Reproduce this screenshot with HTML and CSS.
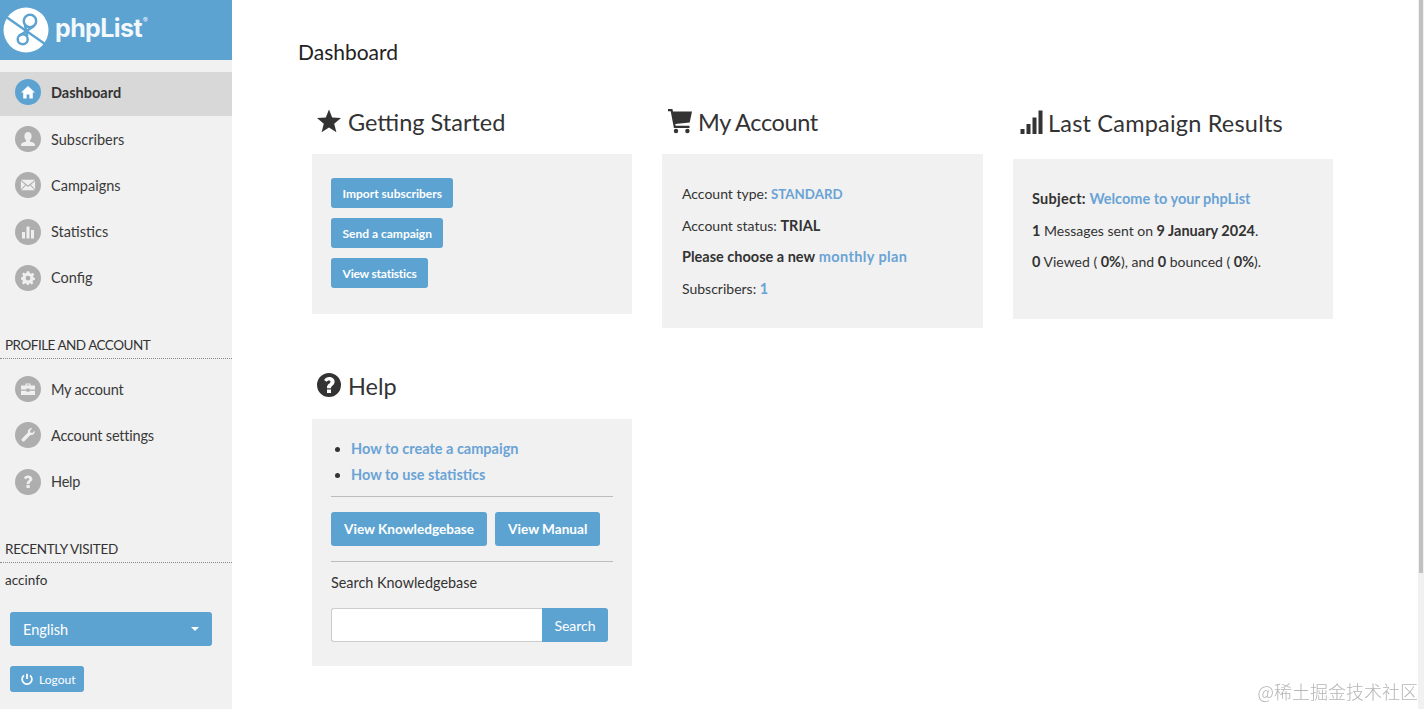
FILE: index.html
```html
<!DOCTYPE html>
<html lang="en">
<head>
<meta charset="utf-8">
<title>phpList Dashboard</title>
<link rel="stylesheet" href="styles.css">
</head>
<body>
<div class="page">
  <aside class="sidebar">
    <header class="brand">
      <svg class="brand-mark" viewBox="0 0 46 46" width="46" height="46">
        <circle cx="23" cy="23" r="22.5" fill="#fff"/>
        <path d="M4 10.5 L42 37" stroke="#5ca3d2" stroke-width="2.4" fill="none"/>
        <path d="M22 18 L24.2 29 M31 19 L16 29" stroke="#5ca3d2" stroke-width="2.5" fill="none"/>
        <circle cx="27" cy="14" r="6.2" stroke="#5ca3d2" stroke-width="2.5" fill="none"/>
        <circle cx="19.7" cy="32.3" r="5" stroke="#5ca3d2" stroke-width="2.5" fill="none"/>
      </svg>
      <span class="brand-name">phpList<sup class="brand-reg">®</sup></span>
    </header>
    <nav class="nav nav-main">
      <a class="nav-item active"><span class="nav-icon"><svg viewBox="0 0 16 16"><path d="M8 2 L1 8.5 H3.2 V14.5 H6.6 V10.5 H9.4 V14.5 H12.8 V8.5 H15 Z"/></svg></span>Dashboard</a>
      <a class="nav-item"><span class="nav-icon"><svg viewBox="0 0 16 16"><path d="M8 1 C10.4 1 11.6 3 11.6 5.2 C11.6 7 10.8 8.4 9.9 9.3 V10.4 C11.7 11.1 14.6 11.6 14.9 13.2 V15 H1.1 V13.2 C1.4 11.6 4.3 11.1 6.1 10.4 V9.3 C5.2 8.4 4.4 7 4.4 5.2 C4.4 3 5.6 1 8 1 Z"/></svg></span>Subscribers</a>
      <a class="nav-item"><span class="nav-icon"><svg viewBox="0 0 18 16"><path d="M1 2 H17 L9 8.6 Z M1 3.6 L5.8 7.6 L1 12.8 Z M17 3.6 V12.8 L12.2 7.6 Z M6.7 8.4 L9 10.2 L11.3 8.4 L16.6 14 H1.4 Z"/></svg></span>Campaigns</a>
      <a class="nav-item"><span class="nav-icon"><svg viewBox="0 0 16 16"><path d="M2 8 H5 V14.5 H2 Z M6.5 2.5 H9.5 V14.5 H6.5 Z M11 6 H14 V14.5 H11 Z"/></svg></span>Statistics</a>
      <a class="nav-item"><span class="nav-icon"><svg viewBox="0 0 16 16"><path fill-rule="evenodd" d="M6.8 1.2 H9.2 L9.6 3 L11.1 3.7 L12.8 2.8 L14.3 4.7 L13 6 L13.3 7.2 L15 8 V9.8 L13.2 10.3 L12.5 11.6 L13.3 13.3 L11.5 14.6 L10.1 13.3 L9 13.6 L8.6 15 H6.9 L6.4 13.6 L5 13.2 L3.5 14.4 L1.9 13 L2.9 11.4 L2.4 10 L1 9.5 V7.3 L2.6 6.9 L3.1 5.5 L2 4 L3.6 2.6 L5.1 3.6 L6.4 3 Z M8 5.8 A2.4 2.4 0 1 0 8 10.6 A2.4 2.4 0 1 0 8 5.8 Z"/></svg></span>Config</a>
    </nav>
    <h2 class="side-heading heading-profile">PROFILE AND ACCOUNT</h2>
    <nav class="nav nav-profile">
      <a class="nav-item"><span class="nav-icon"><svg viewBox="0 0 16 16"><path fill-rule="evenodd" d="M5.5 2.5 H10.5 V4.5 H15 V8.5 H9.5 V7.5 H6.5 V8.5 H1 V4.5 H5.5 Z M6.7 3.6 V4.5 H9.3 V3.6 Z M1 9.7 H6.5 V10.7 H9.5 V9.7 H15 V14 H1 Z"/></svg></span>My account</a>
      <a class="nav-item"><span class="nav-icon"><svg viewBox="0 0 16 16"><path d="M14.6 3.8 C15.2 6.3 13 8.6 10.4 8 L4.6 14 C3.9 14.7 2.8 14.7 2.1 14 C1.4 13.3 1.4 12.2 2.1 11.5 L8 5.6 C7.4 3 9.7 0.8 12.2 1.4 L9.9 3.7 L10.4 5.6 L12.3 6.1 Z"/></svg></span>Account settings</a>
      <a class="nav-item"><span class="nav-icon"><svg viewBox="0 0 16 16"><path d="M8 1.5 C10.7 1.5 12.4 3 12.4 5.1 C12.4 7.6 9.6 7.8 9.6 9.9 H6.6 C6.6 6.9 9.2 6.6 9.2 5.2 C9.2 4.5 8.7 4.1 8 4.1 C7.2 4.1 6.5 4.7 6 5.4 L3.9 3.8 C5 2.3 6.3 1.5 8 1.5 Z M6.5 11 H9.7 V14 H6.5 Z"/></svg></span>Help</a>
    </nav>
    <h2 class="side-heading heading-recent">RECENTLY VISITED</h2>
    <div class="recent">accinfo</div>
    <div class="lang-select"><span>English</span><span class="caret"></span></div>
    <a class="logout"><svg class="logout-icon" viewBox="0 0 16 16" width="14" height="14"><path d="M8 2 V8 M4.6 3.8 A5.6 5.6 0 1 0 11.4 3.8" fill="none" stroke="#fff" stroke-width="2"/></svg>Logout</a>
  </aside>

  <main class="main">
    <h1 class="page-title">Dashboard</h1>
    <div class="columns">
      <div class="column">
        <section class="block">
          <h3 class="block-title"><svg class="title-icon icon-star" viewBox="0 0 26 26"><path d="M13 1.5 L16.2 9.6 L25 10.1 L18.2 15.7 L20.4 24.2 L13 19.5 L5.6 24.2 L7.8 15.7 L1 10.1 L9.8 9.6 Z"/></svg>Getting Started</h3>
          <div class="panel panel-started">
            <a class="btn-small">Import subscribers</a>
            <a class="btn-small">Send a campaign</a>
            <a class="btn-small btn-tight">View statistics</a>
          </div>
        </section>
        <section class="block block-help">
          <h3 class="block-title"><svg class="title-icon icon-help" viewBox="0 0 26 26"><path fill-rule="evenodd" d="M13 1 A12 12 0 1 1 13 25 A12 12 0 1 1 13 1 Z M13.3 5 C10.8 5 9.3 6 8.1 7.9 L10.6 9.8 C11.3 8.9 11.9 8.4 12.9 8.4 C13.8 8.4 14.5 8.9 14.5 9.7 C14.5 11.5 11 11.9 11 15.5 V16.3 H15 C15 13.6 18.6 13.6 18.6 9.6 C18.6 6.6 15.9 5 13.3 5 Z M11 17.6 V21 H15 V17.6 Z"/></svg>Help</h3>
          <div class="panel panel-help">
            <ul class="help-links">
              <li><a class="link">How to create a campaign</a></li>
              <li><a class="link">How to use statistics</a></li>
            </ul>
            <hr class="rule rule-first">
            <div class="btn-row">
              <a class="btn-large">View Knowledgebase</a>
              <a class="btn-large">View Manual</a>
            </div>
            <hr class="rule rule-second">
            <p class="search-label">Search Knowledgebase</p>
            <div class="search">
              <input class="search-input" type="text" aria-label="Search Knowledgebase">
              <button class="search-btn" type="button">Search</button>
            </div>
          </div>
        </section>
      </div>
      <div class="column">
        <section class="block block-account">
          <h3 class="block-title"><svg class="title-icon icon-cart" viewBox="0 0 26 26"><path d="M1 1 H5.4 L6 3.6 H25 L22.7 14.4 L8.3 15.9 L8.7 17.8 H22.5 V20 H6.9 L3.7 3.2 H1 Z"/><circle cx="9" cy="23" r="2.2"/><circle cx="20.4" cy="23" r="2.2"/></svg>My Account</h3>
          <div class="panel panel-account">
            <p class="row">Account type: <a class="link link-caps">STANDARD</a></p>
            <p class="row">Account status: <strong>TRIAL</strong></p>
            <p class="row"><strong>Please choose a new</strong> <a class="link link-wide">monthly plan</a></p>
            <p class="row">Subscribers: <a class="link">1</a></p>
          </div>
        </section>
      </div>
      <div class="column column-last">
        <section class="block">
          <h3 class="block-title"><svg class="title-icon icon-bars" viewBox="0 0 24 26"><path d="M0.5 19 H4.5 V24 H0.5 Z M6.5 14 H10.5 V24 H6.5 Z M12.5 7.5 H16.5 V24 H12.5 Z M18.5 0.5 H22.5 V24 H18.5 Z"/></svg>Last Campaign Results</h3>
          <div class="panel panel-results">
            <p class="row"><strong class="subject">Subject:</strong> <a class="link">Welcome to your phpList</a></p>
            <p class="row"><strong>1</strong> Messages sent on <strong>9 January 2024</strong>.</p>
            <p class="row"><strong>0</strong> Viewed ( <strong>0%</strong>), and <strong>0</strong> bounced ( <strong>0%</strong>).</p>
          </div>
        </section>
      </div>
    </div>
  </main>
</div>
<div class="scrollbar"><div class="scroll-thumb"></div></div>
<div class="watermark">@稀土掘金技术社区</div>
</body>
</html>
```
FILE: styles.css
```css
* { box-sizing: border-box; }
html, body { margin: 0; height: 100%; overflow: hidden; }
body {
  font-family: "Lato", "Noto Sans", sans-serif;
  font-size: 14.5px;
  color: #333;
  background: #fff;
}
a { color: inherit; text-decoration: none; }
.page { display: flex; height: 709px; }

.sidebar {
  width: 232px;
  flex: none;
  background: #f1f1f1;
  display: flex;
  flex-direction: column;
}
.brand {
  height: 60px;
  background: #5ca3d2;
  display: flex;
  align-items: center;
  gap: 6px;
  padding: 0 0 1px 3px;
  flex: none;
}
.brand-mark { flex: none; margin-top: 1px; }
.brand-name {
  font-family: "Inter", "Liberation Sans", sans-serif;
  font-weight: 700;
  font-size: 25px;
  letter-spacing: -0.6px;
  color: #f2f8fc;
  display: flex;
  margin-top: -3px;
}
.brand-reg { font-size: 7px; font-weight: 400; line-height: 1; margin: 4px 0 0 1px; letter-spacing: 0; }
.nav { display: flex; flex-direction: column; }
.nav-main { margin-top: 12px; }
.nav-item {
  display: flex;
  align-items: center;
  gap: 10px;
  height: 46.25px;
  padding-left: 15px;
  color: #3a3a3a;
}
.nav-item.active {
  background: #d8d8d8;
  height: 44px;
  padding-bottom: 4px;
  font-weight: 700;
  color: #333;
}
.nav-icon {
  width: 26px;
  height: 26px;
  border-radius: 50%;
  background: #aeaeae;
  display: flex;
  align-items: center;
  justify-content: center;
  flex: none;
}
.nav-icon svg { width: 16px; height: 16px; fill: #efefef; }
.active .nav-icon { background: #5ca3d2; }
.active .nav-icon svg { fill: #fff; }
.nav-profile .nav-item { letter-spacing: -0.2px; }

.side-heading {
  margin: 0;
  padding: 0 0 3px 5px;
  font-size: 13.5px;
  font-weight: 400;
  line-height: 20px;
  color: #333;
  border-bottom: 1px dotted #8a8a8a;
}
.heading-profile { margin-top: 34px; letter-spacing: -0.5px; }
.nav-profile { margin-top: 7px; }
.heading-recent { margin-top: 34.25px; letter-spacing: -0.3px; }
.recent { padding: 8px 0 0 5px; line-height: 18px; font-size: 13.5px; }
.lang-select {
  margin: 23px 0 0 10px;
  width: 202px;
  height: 34px;
  background: #5ca3d2;
  border-radius: 3px;
  color: #fff;
  display: flex;
  align-items: center;
  justify-content: space-between;
  padding: 0 13px;
}
.caret {
  width: 0;
  height: 0;
  border-left: 4px solid transparent;
  border-right: 4px solid transparent;
  border-top: 4px solid #fff;
}
.logout {
  margin: 20px 0 0 10px;
  width: 74px;
  height: 26px;
  background: #5ca3d2;
  border-radius: 3px;
  color: #fff;
  font-size: 12px;
  display: flex;
  align-items: center;
  padding-left: 10px;
  gap: 5px;
}
.logout-icon { flex: none; }

.main { flex: 1; padding: 0 0 0 65px; }
.page-title {
  margin: 0;
  padding: 39px 0 0 1px;
  font-size: 21px;
  line-height: 26px;
  font-weight: 400;
  color: #222;
}
.columns { display: flex; margin: 1px 0 0 15px; gap: 30px; }
.column { width: 320px; flex: none; }
.column:nth-child(2) { width: 321px; }
.column-last { padding-top: 1px; }

.block-title {
  margin: 0;
  height: 88px;
  padding-top: 41px;
  padding-left: 4px;
  display: flex;
  align-items: flex-start;
  font-size: 23.5px;
  line-height: 30px;
  font-weight: 400;
  color: #333;
  gap: 5px;
}
.block-title { gap: 6px; }
.block-account .block-title { letter-spacing: -0.4px; padding-left: 5px; gap: 5px; }
.column-last .block-title { height: 92px; padding-left: 6px; padding-top: 41px; gap: 3px; letter-spacing: 0.2px; }
.title-icon { width: 26px; height: 26px; flex: none; fill: #333; margin-top: 1px; }
.column-last .title-icon { margin-top: 2px; }
.block-help .block-title { height: 105px; padding-top: 57px; }

.panel { background: #f1f1f1; padding: 24px 19px; }
.panel-started { height: 160px; display: flex; flex-direction: column; align-items: flex-start; gap: 10px; }
.panel-account { height: 174px; padding-top: 31px; padding-left: 20px; }
.panel-results { height: 160px; padding-top: 31px; }
.panel-help { height: 247px; padding-top: 17px; }

.btn-small {
  background: #5ca3d2;
  color: #fff;
  font-size: 12px;
  font-weight: 700;
  height: 30px;
  padding: 0 11.5px;
  border-radius: 3px;
  display: flex;
  align-items: center;
}
.btn-tight { letter-spacing: -0.2px; }
.row { margin: 0 0 13.5px; line-height: 18px; font-size: 14px; }
strong { font-weight: 700; font-size: 14.5px; }
.subject { letter-spacing: 0.25px; }
.link { color: #6aa3d5; font-weight: 700; font-size: 14.5px; }
.link-caps { font-size: 13.3px; }
.link-wide { letter-spacing: 0.4px; }

.help-links { margin: 0; padding: 0 0 0 20px; color: #333; }
.help-links li { line-height: 26px; font-size: 14.5px; }
.rule { border: 0; border-top: 1px solid #bdbdbd; margin: 0; }
.rule-first { margin-top: 8px; }
.btn-row { display: flex; gap: 8px; margin-top: 15px; }
.btn-large {
  height: 34px;
  padding: 0 13px;
  background: #5ca3d2;
  color: #fff;
  font-weight: 700;
  font-size: 13.6px;
  border-radius: 3px;
  display: flex;
  align-items: center;
}
.rule-second { margin-top: 15px; }
.search-label { margin: 12px 0 0; line-height: 18px; font-size: 14.4px; }
.search { display: flex; margin-top: 16px; width: 277px; height: 34px; }
.search-input {
  flex: 1;
  min-width: 0;
  border: 1px solid #ccc;
  border-right: 0;
  border-radius: 3px 0 0 3px;
  background: #fff;
  padding: 0;
}
.search-btn {
  width: 66px;
  border: 0;
  background: #5ca3d2;
  color: #fff;
  font-family: inherit;
  font-size: 14px;
  border-radius: 0 3px 3px 0;
  padding: 0;
}

.scrollbar {
  position: fixed;
  top: 0;
  right: 0;
  width: 6px;
  height: 709px;
  background: #f1f1f1;
}
.scroll-thumb { width: 4px; margin-left: 1px; height: 573px; background: #c1c1c1; }
.watermark {
  position: fixed;
  right: 6px;
  bottom: 7px;
  font-family: "Noto Sans CJK SC", "Noto Sans", sans-serif;
  font-size: 18px;
  font-weight: 300;
  line-height: 22px;
  color: #b5b5b5;
}
```
